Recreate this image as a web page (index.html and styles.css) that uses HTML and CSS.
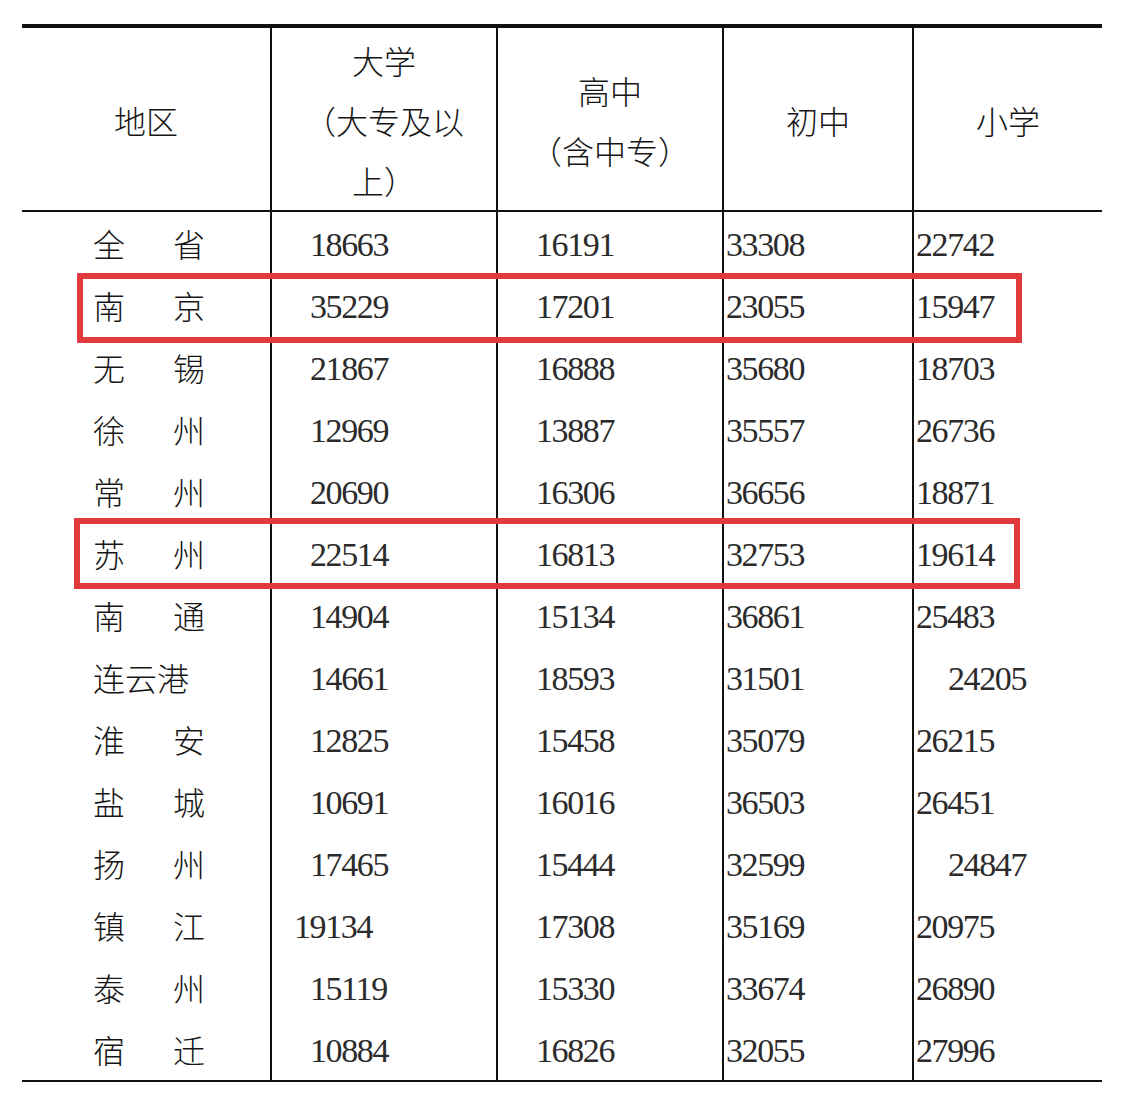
FILE: index.html
```html
<!DOCTYPE html>
<html lang="zh-CN">
<head>
<meta charset="utf-8">
<title>江苏各地区每10万人受教育程度</title>
<link rel="stylesheet" href="styles.css">
</head>
<body>
<div class="page">
  <div class="sheet">
    <div class="grid">
      <div class="cell head">地区</div>
      <div class="cell head">大学<br>（大专及以<br>上）</div>
      <div class="cell head">高中<br>（含中专）</div>
      <div class="cell head">初中</div>
      <div class="cell head last">小学</div>

      <div class="cell name"><span>全</span><span class="second">省</span></div>
      <div class="cell num c2">18663</div><div class="cell num c3">16191</div><div class="cell num c4">33308</div><div class="cell num c5 last">22742</div>

      <div class="cell name"><span>南</span><span class="second">京</span></div>
      <div class="cell num c2">35229</div><div class="cell num c3">17201</div><div class="cell num c4">23055</div><div class="cell num c5 last">15947</div>

      <div class="cell name"><span>无</span><span class="second">锡</span></div>
      <div class="cell num c2">21867</div><div class="cell num c3">16888</div><div class="cell num c4">35680</div><div class="cell num c5 last">18703</div>

      <div class="cell name"><span>徐</span><span class="second">州</span></div>
      <div class="cell num c2">12969</div><div class="cell num c3">13887</div><div class="cell num c4">35557</div><div class="cell num c5 last">26736</div>

      <div class="cell name"><span>常</span><span class="second">州</span></div>
      <div class="cell num c2">20690</div><div class="cell num c3">16306</div><div class="cell num c4">36656</div><div class="cell num c5 last">18871</div>

      <div class="cell name"><span>苏</span><span class="second">州</span></div>
      <div class="cell num c2">22514</div><div class="cell num c3">16813</div><div class="cell num c4">32753</div><div class="cell num c5 last">19614</div>

      <div class="cell name"><span>南</span><span class="second">通</span></div>
      <div class="cell num c2">14904</div><div class="cell num c3">15134</div><div class="cell num c4">36861</div><div class="cell num c5 last">25483</div>

      <div class="cell name"><span>连云港</span></div>
      <div class="cell num c2">14661</div><div class="cell num c3">18593</div><div class="cell num c4">31501</div><div class="cell num c5 shift last">24205</div>

      <div class="cell name"><span>淮</span><span class="second">安</span></div>
      <div class="cell num c2">12825</div><div class="cell num c3">15458</div><div class="cell num c4">35079</div><div class="cell num c5 last">26215</div>

      <div class="cell name"><span>盐</span><span class="second">城</span></div>
      <div class="cell num c2">10691</div><div class="cell num c3">16016</div><div class="cell num c4">36503</div><div class="cell num c5 last">26451</div>

      <div class="cell name"><span>扬</span><span class="second">州</span></div>
      <div class="cell num c2">17465</div><div class="cell num c3">15444</div><div class="cell num c4">32599</div><div class="cell num c5 shift last">24847</div>

      <div class="cell name"><span>镇</span><span class="second">江</span></div>
      <div class="cell num c2 early">19134</div><div class="cell num c3">17308</div><div class="cell num c4">35169</div><div class="cell num c5 last">20975</div>

      <div class="cell name"><span>泰</span><span class="second">州</span></div>
      <div class="cell num c2">15119</div><div class="cell num c3">15330</div><div class="cell num c4">33674</div><div class="cell num c5 last">26890</div>

      <div class="cell name"><span>宿</span><span class="second">迁</span></div>
      <div class="cell num c2">10884</div><div class="cell num c3">16826</div><div class="cell num c4">32055</div><div class="cell num c5 last">27996</div>
    </div>
    <div class="mark mark-nanjing"></div>
    <div class="mark mark-suzhou"></div>
  </div>
</div>
</body>
</html>
```

FILE: styles.css
```css
html, body {
  margin: 0;
  padding: 0;
  background: #ffffff;
}

.page {
  padding: 24px 0 0 22px;
}

.sheet {
  position: relative;
  width: 1080px;
}

.grid {
  display: grid;
  grid-template-columns: 250px 226px 226px 190px 188px;
  grid-template-rows: 184px;
  grid-auto-rows: 62px;
  border-top: 4px solid #111;
  border-bottom: 2px solid #111;
  color: #161616;
}

.cell {
  box-sizing: border-box;
  border-right: 2px solid #111;
  display: flex;
  align-items: center;
}

.cell.last {
  border-right: none;
}

.head {
  grid-row: 1;
  height: 184px;
  border-bottom: 2px solid #111;
  justify-content: center;
  text-align: center;
  font-family: "Noto Sans CJK SC", sans-serif;
  font-weight: 300;
  font-size: 32px;
  line-height: 60px;
  padding-top: 2px;
}

.name {
  padding-left: 71px;
  font-family: "Noto Sans CJK SC", sans-serif;
  font-weight: 300;
  font-size: 32px;
  line-height: 1;
}

.name .second {
  margin-left: 48px;
}

.num {
  font-family: "Liberation Serif", serif;
  font-size: 34px;
  letter-spacing: -1.4px;
  line-height: 1;
  padding-top: 3px;
  color: #2b2b2b;
}

.c2, .c3 {
  padding-left: 38px;
}

.c4, .c5 {
  padding-left: 2px;
}

.c5.shift {
  padding-left: 34px;
}

.c2.early {
  padding-left: 22px;
}

.mark {
  position: absolute;
  box-sizing: border-box;
  border: 6px solid #e03a3c;
  pointer-events: none;
}

.mark-nanjing {
  left: 55px;
  top: 249px;
  width: 945px;
  height: 70px;
}

.mark-suzhou {
  left: 52px;
  top: 494px;
  width: 946px;
  height: 71px;
}
```
